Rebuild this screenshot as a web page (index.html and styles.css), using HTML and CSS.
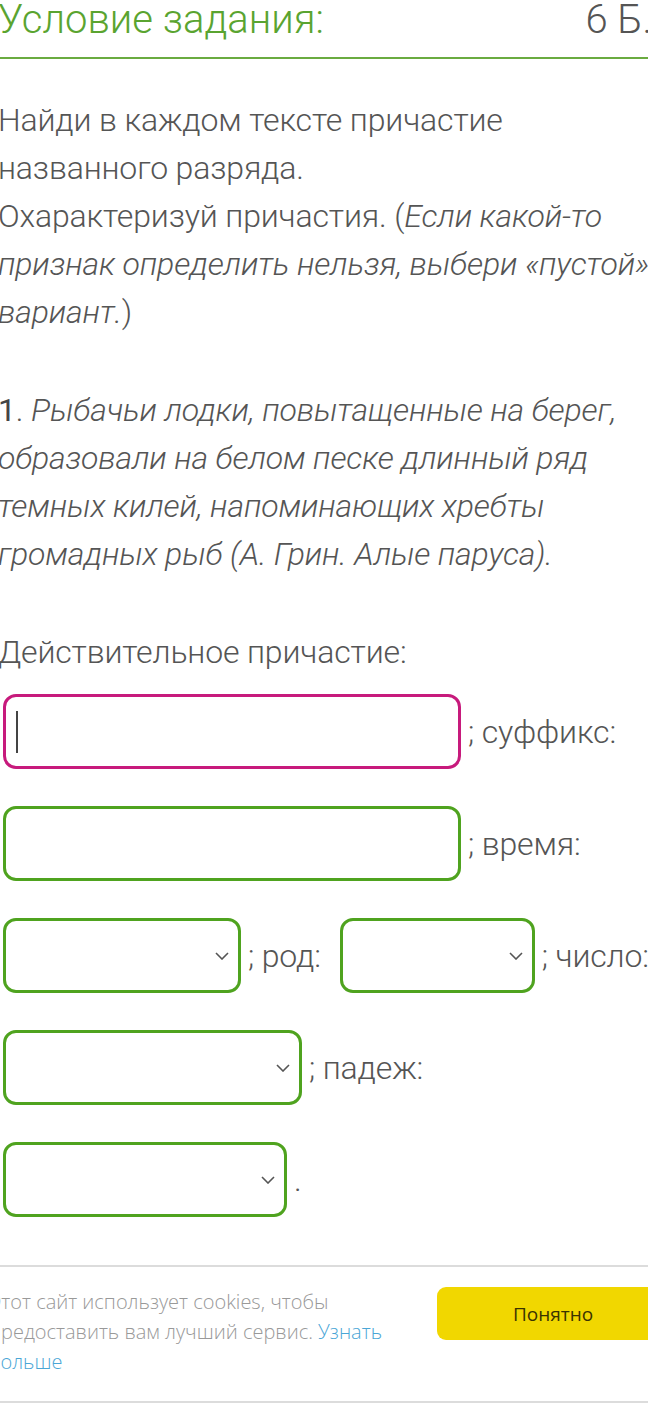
FILE: index.html
```html
<!DOCTYPE html>
<html lang="ru">
<head>
<meta charset="utf-8">
<link rel="stylesheet" href="styles.css">
</head>
<body>
<div class="page">
  <div class="task-head">
    <span class="task-title">Условие задания:</span>
    <span class="task-score">6 Б.</span>
  </div>
  <div class="task-body">
    <p class="para">Найди в каждом тексте причастие<br>названного разряда.<br>Охарактеризуй причастия. (<i>Если какой-то<br>признак определить нельзя, выбери «пустой»<br>вариант.</i>)</p>
    <p class="para"><span class="num">1</span>. <i>Рыбачьи лодки, повытащенные на берег,<br>образовали на белом песке длинный ряд<br>темных килей, напоминающих хребты<br>громадных рыб (А. Грин. Алые паруса).</i></p>
    <p class="para para-last">Действительное причастие:</p>
    <div class="answers">
      <div class="row">
        <div class="field field-text field-active"><span class="caret"></span></div>
        <span class="label">; суффикс:</span>
      </div>
      <div class="row">
        <div class="field field-text"></div>
        <span class="label">; время:</span>
      </div>
      <div class="row">
        <div class="field field-select w-238"><svg class="chev" viewBox="0 0 14 8"><path d="M1 1 L7 7 L13 1" /></svg></div>
        <span class="label">; род:</span>
        <div class="field field-select w-195"><svg class="chev" viewBox="0 0 14 8"><path d="M1 1 L7 7 L13 1" /></svg></div>
        <span class="label">; число:</span>
      </div>
      <div class="row">
        <div class="field field-select w-299"><svg class="chev" viewBox="0 0 14 8"><path d="M1 1 L7 7 L13 1" /></svg></div>
        <span class="label">; падеж:</span>
      </div>
      <div class="row">
        <div class="field field-select w-284"><svg class="chev" viewBox="0 0 14 8"><path d="M1 1 L7 7 L13 1" /></svg></div>
        <span class="label">.</span>
      </div>
    </div>
  </div>
  <div class="cookie">
    <p class="cookie-text">Этот сайт использует cookies, чтобы предоставить вам лучший сервис. <a class="cookie-link" href="#">Узнать больше</a></p>
    <button class="cookie-btn">Понятно</button>
  </div>
</div>
</body>
</html>
```

FILE: styles.css
```css
html, body {
  margin: 0;
  padding: 0;
  background: #fff;
  overflow: hidden;
}
body {
  width: 648px;
  height: 1404px;
  font-family: Roboto, "Noto Sans", sans-serif;
  font-weight: 300;
  color: #555;
}
.page {
  width: 654px;
  margin-left: -2px;
}
.task-head {
  display: flex;
  justify-content: space-between;
  align-items: flex-start;
  box-sizing: border-box;
  height: 59px;
  border-bottom: 2px solid #6aab40;
  font-size: 40px;
  line-height: 40px;
}
.task-title {
  color: #5aa430;
}
.task-score {
  color: #555;
}
.task-body {
  padding-top: 37px;
  font-size: 32px;
  line-height: 48px;
  letter-spacing: -0.15px;
}
.para {
  margin: 0 0 50px 0;
  white-space: nowrap;
}
.para-last {
  margin-bottom: 18px;
}
.num {
  font-weight: 400;
  color: #444;
}
.answers {
  display: flex;
  flex-direction: column;
  gap: 37px;
}
.row {
  display: flex;
  align-items: center;
  gap: 7px;
  padding-left: 5px;
}
.field {
  box-sizing: border-box;
  height: 75px;
  border: 3.5px solid #4fa31f;
  border-radius: 13px;
  background: #fff;
  display: flex;
  align-items: center;
  flex-shrink: 0;
}
.field-text {
  width: 458px;
}
.field-active {
  border-color: #c71a7c;
}
.caret {
  display: block;
  width: 2px;
  height: 42px;
  background: #444;
  margin-left: 10px;
}
.field-select {
  justify-content: flex-end;
  padding-right: 9px;
}
.w-238 { width: 238px; }
.w-195 { width: 195px; margin-left: 12px; }
.w-299 { width: 299px; }
.w-284 { width: 284px; }
.chev {
  width: 14px;
  height: 8px;
  fill: none;
  stroke: #555;
  stroke-width: 1.6;
}
.label {
  white-space: nowrap;
}
.cookie {
  margin-top: 48px;
  margin-left: -9px;
  width: 680px;
  box-sizing: border-box;
  border-top: 2px solid #dcdcdc;
  border-bottom: 2px solid #dcdcdc;
  display: flex;
  align-items: flex-start;
  justify-content: space-between;
  padding: 20px 0 24px 0;
}
.cookie-text {
  margin: 0;
  width: 420px;
  font-family: "Open Sans", sans-serif;
  font-weight: 300;
  font-size: 20px;
  line-height: 30px;
  color: #999;
}
.cookie-link {
  color: #4aa6d6;
  text-decoration: none;
}
.cookie-btn {
  width: 232px;
  height: 53px;
  background: #f1d700;
  border: none;
  border-radius: 9px;
  font-family: "Open Sans", sans-serif;
  font-size: 19px;
  color: #3a3300;
  padding: 0;
}
```
